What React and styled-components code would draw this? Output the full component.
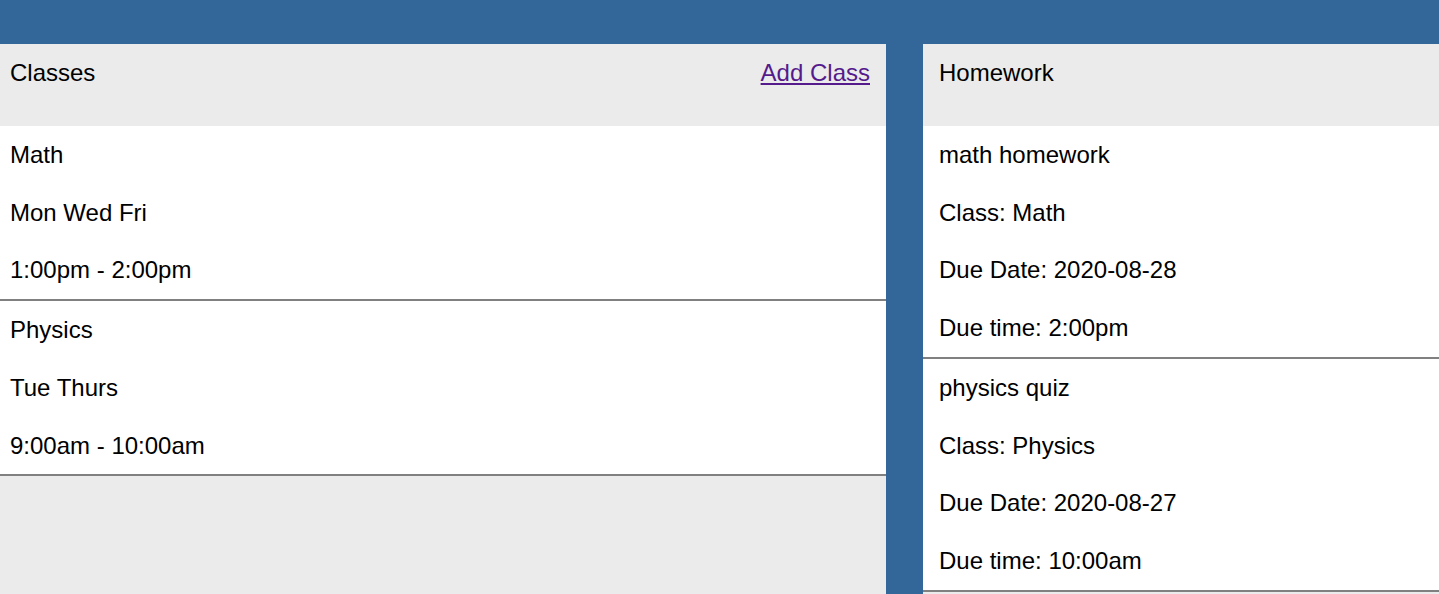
import React from 'react';
import styled, { createGlobalStyle } from 'styled-components';

const GlobalStyle = createGlobalStyle`
  html, body {
    margin: 0;
    padding: 0;
    background: #336699;
    font-family: "Liberation Sans", Arial, sans-serif;
  }
`;

const Page = styled.div`
  height: 100vh;
  display: flex;
  flex-direction: column;
  overflow: hidden;
`;

const TopBar = styled.div`
  height: 44px;
  flex-shrink: 0;
  background: #336699;
`;

const Columns = styled.div`
  flex: 1;
  display: flex;
  gap: 37px;
  min-height: 0;
`;

const Panel = styled.section`
  width: ${p => p.width || 'auto'};
  flex: ${p => (p.width ? '0 0 auto' : '1')};
  background: #ebebeb;
  display: flex;
  flex-direction: column;
  --pad: ${p => p.pad}px;
`;

const Header = styled.div`
  height: 82px;
  flex-shrink: 0;
  display: flex;
  justify-content: space-between;
  align-items: flex-start;
  padding: 0 16px 0 var(--pad);
  font-size: 24px;
  line-height: 58px;
  color: #000;
`;

const AddLink = styled.a`
  color: #551a8b;
  text-decoration: underline;
  cursor: pointer;
`;

const Item = styled.div`
  background: #fff;
  border-bottom: 2px solid #808080;
  padding: 0 16px 0 var(--pad);
`;

const Line = styled.div`
  font-size: 24px;
  line-height: 57.7px;
  color: #000;
  white-space: nowrap;
`;

const classes = [
  { name: 'Math', days: 'Mon Wed Fri', time: '1:00pm - 2:00pm' },
  { name: 'Physics', days: 'Tue Thurs', time: '9:00am - 10:00am' },
];

const homework = [
  { title: 'math homework', cls: 'Math', date: '2020-08-28', time: '2:00pm' },
  { title: 'physics quiz', cls: 'Physics', date: '2020-08-27', time: '10:00am' },
];

export default function App() {
  return (
    <>
      <GlobalStyle />
      <Page>
        <TopBar />
        <Columns>
          <Panel width="886px" pad={10}>
            <Header>
              <span>Classes</span>
              <AddLink href="#">Add Class</AddLink>
            </Header>
            {classes.map(c => (
              <Item key={c.name}>
                <Line>{c.name}</Line>
                <Line>{c.days}</Line>
                <Line>{c.time}</Line>
              </Item>
            ))}
          </Panel>
          <Panel pad={16}>
            <Header>
              <span>Homework</span>
            </Header>
            {homework.map(h => (
              <Item key={h.title}>
                <Line>{h.title}</Line>
                <Line>Class: {h.cls}</Line>
                <Line>Due Date: {h.date}</Line>
                <Line>Due time: {h.time}</Line>
              </Item>
            ))}
          </Panel>
        </Columns>
      </Page>
    </>
  );
}
